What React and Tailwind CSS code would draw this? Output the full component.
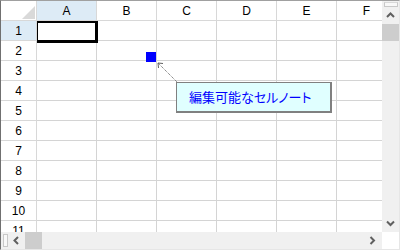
import React from "react";

const cols = ["A", "B", "C", "D", "E", "F"];
const rows = [1, 2, 3, 4, 5, 6, 7, 8, 9, 10, 11];

function Chevron({ dir }) {
  const d = {
    up: "M1 5 L4.5 1.5 L8 5",
    down: "M1 1.5 L4.5 5 L8 1.5",
    left: "M5 1 L1.5 4.5 L5 8",
    right: "M1.5 1 L5 4.5 L1.5 8",
  }[dir];
  const vertical = dir === "up" || dir === "down";
  return (
    <svg width={vertical ? 9 : 7} height={vertical ? 7 : 9} viewBox={vertical ? "0 0 9 7" : "0 0 7 9"}>
      <path d={d} fill="none" stroke="#606060" strokeWidth="2" />
    </svg>
  );
}

export default function App() {
  return (
    <div className="relative w-[400px] h-[250px] flex flex-col bg-white overflow-hidden border-l border-t border-r border-b border-l-[#707070] border-t-[#a0a0a0] border-r-[#e6e6e6] border-b-[#e6e6e6] font-['Liberation_Sans',sans-serif] text-[12px] text-black">
      <div className="flex h-[231px]">
        <div className="w-[381px] overflow-hidden">
          <div className="grid grid-cols-[36px_repeat(6,60px)] auto-rows-[20px] w-[396px]">
            <div className="border-r border-b border-[#d8d8d8] bg-white flex items-end justify-end pr-[1px] pb-[1px]">
              <svg width="13" height="13" viewBox="0 0 13 13">
                <path d="M13 0 L13 13 L0 13 Z" fill="#d9d9d9" />
              </svg>
            </div>
            {cols.map((c) => (
              <div
                key={c}
                className={`border-r border-b border-[#d8d8d8] flex items-center justify-center ${c === "A" ? "bg-[#ddebf6]" : "bg-white"}`}
              >
                {c}
              </div>
            ))}
            {rows.map((r) => (
              <React.Fragment key={r}>
                <div
                  className={`border-r border-b border-[#d8d8d8] flex items-center justify-center ${r === 1 ? "bg-[#ddebf6]" : "bg-white"}`}
                >
                  {r}
                </div>
                {cols.map((c) => (
                  <div key={c} className="border-r border-b border-[#d4d4d4] bg-white" />
                ))}
              </React.Fragment>
            ))}
          </div>
        </div>
        <div className="w-[17px] bg-[#f0f0f0] flex flex-col items-center">
          <div className="mt-[1px] w-[14px] h-[5px] border border-[#c8c8c8] border-t-[#d8d8d8] bg-[#f8f8f8]" />
          <div className="h-[17px] w-full flex items-center justify-center">
            <Chevron dir="up" />
          </div>
          <div className="w-full h-[17px] bg-[#cdcdcd]" />
          <div className="flex-1" />
          <div className="h-[17px] w-full flex items-center justify-center">
            <Chevron dir="down" />
          </div>
        </div>
      </div>
      <div className="flex h-[17px]">
        <div className="w-[381px] bg-[#f0f0f0] flex items-center">
          <div className="ml-[2px] w-[5px] h-[13px] border border-[#c8c8c8] bg-[#f8f8f8]" />
          <div className="w-[17px] h-full flex items-center justify-center">
            <Chevron dir="left" />
          </div>
          <div className="w-[17px] h-full bg-[#cdcdcd]" />
          <div className="flex-1" />
          <div className="w-[17px] h-full flex items-center justify-center mr-[1px]">
            <Chevron dir="right" />
          </div>
        </div>
        <div className="w-[17px] bg-white" />
      </div>

      {/* active cell selection */}
      <div className="absolute left-[36px] top-[20px] w-[61px] h-[22px] border-black border-l border-t-2 border-r-[3px] border-b-[3px]" />

      {/* note indicator */}
      <div className="absolute left-[145px] top-[51px] w-[10px] h-[10px] bg-[#0000ff]" />

      {/* note leader line */}
      <svg className="absolute left-0 top-0" width="398" height="248">
        <line x1="157" y1="62" x2="176" y2="81" stroke="#606060" strokeWidth="1" strokeDasharray="1 1" />
        <path d="M157 62 L157.5 67 M157 62 L162 62.5" stroke="#606060" strokeWidth="1" fill="none" />
      </svg>

      {/* note box */}
      <div className="absolute left-[175px] top-[81px] w-[156px] h-[31px] bg-[#e0ffff] border-l border-t border-r-2 border-b-2 border-[#808080] flex items-center pl-[12px] text-[#0000ff] text-[13px] font-['Noto_Sans_CJK_JP',sans-serif] [font-feature-settings:'palt']">
        編集可能なセルノート
      </div>
    </div>
  );
}
